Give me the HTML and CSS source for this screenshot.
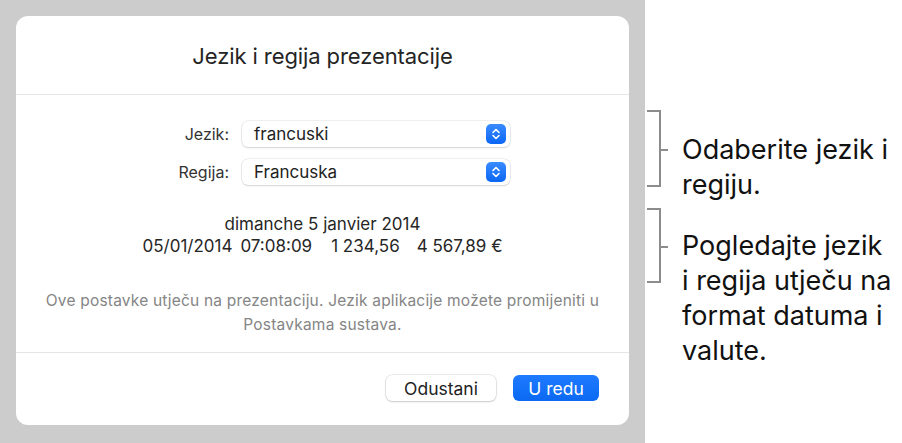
FILE: index.html
```html
<!DOCTYPE html>
<html lang="hr">
<head>
<meta charset="utf-8">
<title>Jezik i regija prezentacije</title>
<link rel="stylesheet" href="styles.css">
</head>
<body>
<div class="stage">
  <div class="dialog">
    <div class="dialog-header">Jezik i regija prezentacije</div>
    <div class="dialog-body">
      <div class="form">
        <label class="form-label">Jezik:</label>
        <div class="popup"><span class="popup-value">francuski</span>
          <span class="stepper"><svg width="10" height="14" viewBox="0 0 10 14"><path d="M2 5.5 L5 2.5 L8 5.5 M2 8.5 L5 11.5 L8 8.5" fill="none" stroke="#fff" stroke-width="1.6" stroke-linecap="round" stroke-linejoin="round"/></svg></span>
        </div>
        <label class="form-label">Regija:</label>
        <div class="popup"><span class="popup-value">Francuska</span>
          <span class="stepper"><svg width="10" height="14" viewBox="0 0 10 14"><path d="M2 5.5 L5 2.5 L8 5.5 M2 8.5 L5 11.5 L8 8.5" fill="none" stroke="#fff" stroke-width="1.6" stroke-linecap="round" stroke-linejoin="round"/></svg></span>
        </div>
      </div>
      <div class="preview">
        <div class="preview-line">dimanche 5 janvier 2014</div>
        <div class="preview-line preview-values">
          <span>05/01/2014</span><span class="v-time">07:08:09</span><span class="v-num">1 234,56</span><span class="v-cur">4 567,89 €</span>
        </div>
      </div>
      <p class="note">Ove postavke utječu na prezentaciju. Jezik aplikacije možete promijeniti u Postavkama sustava.</p>
    </div>
    <div class="dialog-footer">
      <button class="btn">Odustani</button>
      <button class="btn btn-primary">U redu</button>
    </div>
  </div>
</div>
<div class="callouts">
  <div class="callout callout-first">
    <div class="bracket b1"></div>
    <div class="callout-text t1">Odaberite jezik i<br>regiju.</div>
  </div>
  <div class="callout callout-second">
    <div class="bracket b2"></div>
    <div class="callout-text t2">Pogledajte jezik<br>i regija utječu na<br>format datuma i<br>valute.</div>
  </div>
</div>
</body>
</html>
```
FILE: styles.css
```css
* { box-sizing: border-box; }
html, body { margin: 0; padding: 0; }
body {
  width: 902px;
  height: 443px;
  display: flex;
  background: #ffffff;
  font-family: "Inter", "Roboto", "Liberation Sans", sans-serif;
  color: #1d1d1f;
  overflow: hidden;
}
.stage {
  width: 645px;
  height: 443px;
  background: #cccccc;
  padding: 16px 16px 0 16px;
}
.dialog {
  width: 613px;
  height: 409px;
  background: #ffffff;
  border-radius: 12px;
  display: flex;
  flex-direction: column;
}
.dialog-header {
  height: 79px;
  border-bottom: 1px solid #e6e6e6;
  display: flex;
  align-items: center;
  justify-content: center;
  font-size: 22px;
  letter-spacing: -0.1px;
  color: #242424;
  padding-top: 1px;
}
.dialog-body {
  padding-top: 26px;
  height: 258px;
  border-bottom: 1px solid #e6e6e6;
}
.form {
  display: grid;
  grid-template-columns: 213px 268px;
  column-gap: 13px;
  row-gap: 12px;
  align-items: center;
}
.form-label {
  text-align: right;
  font-size: 16px;
  color: #333;
}
.popup {
  height: 26px;
  border-radius: 6px;
  background: #fff;
  box-shadow: 0 0 0 0.5px rgba(0,0,0,0.12), 0 1px 2px rgba(0,0,0,0.12);
  display: flex;
  align-items: center;
  justify-content: space-between;
  padding: 0 4px 0 12px;
}
.popup-value { font-size: 17px; color: #222; }
.stepper {
  width: 20px;
  height: 20px;
  border-radius: 5px;
  background: linear-gradient(#3b8bff, #0a66f5);
  display: flex;
  align-items: center;
  justify-content: center;
}
.preview {
  margin-top: 28px;
  text-align: center;
  font-size: 17px;
  line-height: 22px;
  color: #262626;
}
.preview-values {
  display: flex;
  justify-content: center;
}
.v-time { margin-left: 8px; }
.v-num { margin-left: 19px; }
.v-cur { margin-left: 17px; }
.note {
  margin: 32px 20px 0 20px;
  text-align: center;
  font-size: 15.5px;
  letter-spacing: 0.2px;
  line-height: 24px;
  color: #858585;
}
.dialog-footer {
  display: flex;
  justify-content: flex-end;
  gap: 17px;
  padding: 22px 30px 0 0;
}
.btn {
  height: 26px;
  border: none;
  border-radius: 6px;
  font-family: inherit;
  font-size: 17.5px;
  color: #222;
  background: #fff;
  box-shadow: 0 0 0 0.5px rgba(0,0,0,0.15), 0 1px 2px rgba(0,0,0,0.15);
  width: 110px;
  padding: 0;
}
.btn-primary {
  width: 86px;
  color: #fff;
  background: linear-gradient(#1f7bff, #0a68f2);
  box-shadow: none;
}
.callouts {
  flex: 1;
  padding-left: 2px;
  padding-top: 110px;
}
.callout {
  display: flex;
  align-items: flex-start;
}
.callout-second { margin-top: 6px; }
.bracket {
  position: relative;
  width: 14px;
  border: 2px solid #8c8c8c;
  border-left: none;
}
.bracket::after {
  content: "";
  position: absolute;
  left: 12px;
  width: 9px;
  height: 2px;
  background: #8c8c8c;
}
.b1 { height: 77px; }
.b1::after { top: 37px; }
.b2 { height: 75px; }
.b2::after { top: 36px; }
.callout-text {
  margin-left: 21px;
  font-size: 27px;
  line-height: 35px;
  color: #111;
  white-space: nowrap;
}
.t1 { margin-top: 22px; }
.t2 { margin-top: 20px; }
```
